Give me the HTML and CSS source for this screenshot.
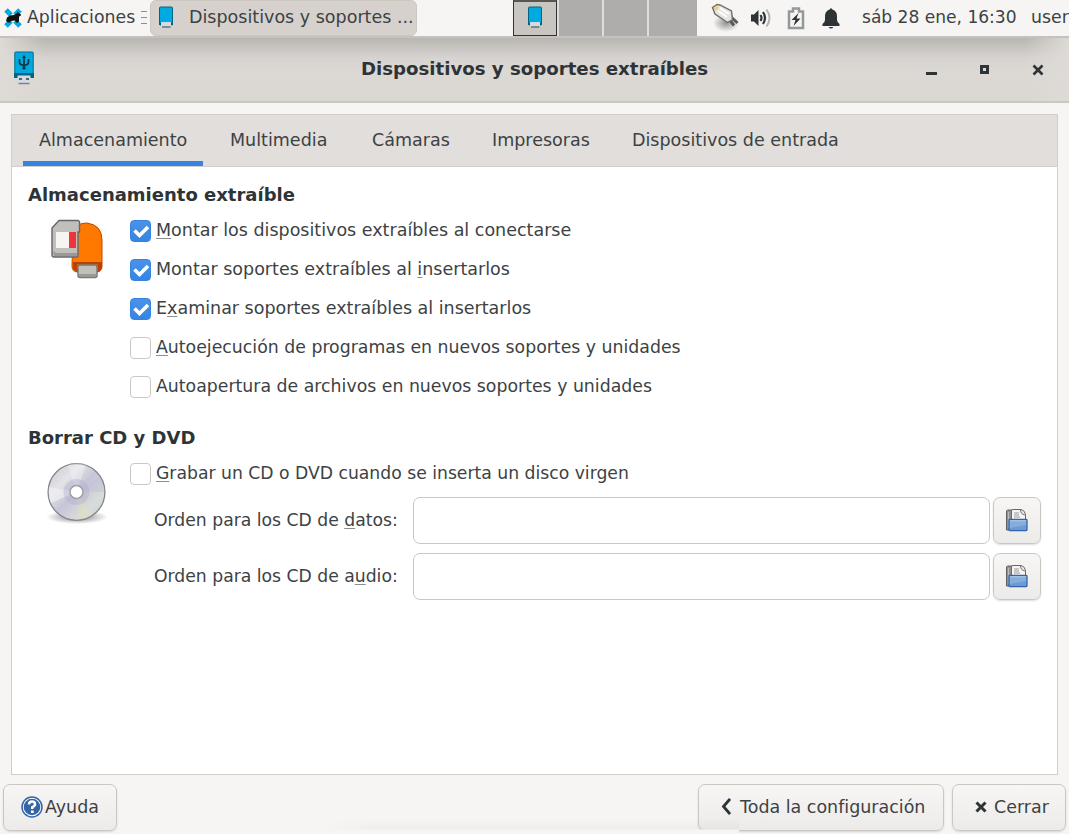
FILE: index.html
```
<!DOCTYPE html>
<html lang="es">
<head>
<meta charset="utf-8">
<title>Dispositivos y soportes extraíbles</title>
<link rel="stylesheet" href="styles.css">
</head>
<body>
<svg class="defs" width="0" height="0" aria-hidden="true">
  <defs>
    <symbol id="drive" viewBox="0 0 16 22">
      <rect x="1.500" y="1" width="13" height="18" rx="1" fill="#00a9e0" stroke="#006581"/>
      <path d="M1 16.500h14v2.500H1z" fill="#006581"/>
      <path d="M3 16h10v4.500H3z" fill="#d3dae3"/>
      <path d="M4 21h8.500" stroke="#647382" stroke-width="1.500"/>
    </symbol>
    <symbol id="folder" viewBox="0 0 24 24">
      <path d="M1.500 22V3l1-1h5v20z" fill="#929292" stroke="#5e5e5e"/>
      <path d="M3.500 4v16" stroke="#bbb"/>
      <path d="M6.500 14V2l1.500-.5h8q4 1 4.500 5v9z" fill="#f4f4f2" stroke="#696969"/>
      <path d="M15.500 2q0 4 4.500 5" fill="#ddd" stroke="#777"/>
      <path d="M9 5h5M9 7h5M9 9h6" stroke="#999"/>
      <rect x="4" y="11.500" width="18" height="11" rx=".8" fill="#85addc" stroke="#2f65ae" stroke-width="1.300"/>
      <path d="M5 12.800h16" stroke="#b8d0ed"/><path d="M5 20l16-3v4.500H5z" fill="#6d9ad1"/>
    </symbol>
  </defs>
</svg>
<header class="panel">
  <svg class="apps-icon" viewBox="0 0 20 20"><path d="M3 2l5 5M17 2l-5 5M3 18l5-5M17 18l-5-5" stroke="#00a9e0" stroke-width="5"/><path d="M3 13l1-3.500 3-2 4-.5 3-2 .500-1.500L16 5l2 1.500-.5 1.500-1.500.5v4.500l-1 1.500h-2l-1-2-4 .5-1 1.500H5z" fill="#111"/></svg>
  <span class="apps-label"><span class="t">Aplicaciones</span></span>
  <span class="grip"></span>
  <div class="task"><svg class="task-icon"><use href="#drive"/></svg><span class="t">Dispositivos y soportes ...</span></div>
  <div class="pager"><div class="desk active"><svg class="task-icon"><use href="#drive"/></svg></div><div class="desk"></div><div class="desk"></div><div class="desk last"></div></div>
  <div class="tray">
    <svg class="plug" viewBox="0 0 28 30"><defs><radialGradient id="ps"><stop offset="0" stop-color="#000" stop-opacity=".4"/><stop offset="1" stop-color="#000" stop-opacity="0"/></radialGradient></defs><ellipse cx="15" cy="20" rx="13" ry="9" fill="url(#ps)"/><path d="M18 16l5 6.500M20 14l6.500 6" stroke="#5a5a5a" stroke-width="3"/><path d="M1.500 4.500L6 1.500l3 .5 11.500 6 1 9-5 2.500L4 11z" fill="#e4e4e2" stroke="#6e6e6c" stroke-width="1.400"/><path d="M3 5l3-2 2 2-4 3z" fill="#f3cf60"/><path d="M7 8l9 6M9 5l9 6" stroke="#fff" stroke-width="2"/></svg>
    <svg class="vol" viewBox="0 0 22 20"><path d="M1 6.500h3L8.500 2v16L4 13.500H1z" fill="#2e3436"/><path d="M10.500 7q2 3 0 6M13 4q4 6 0 12" fill="none" stroke="#2e3436" stroke-width="2.200"/><path d="M16.500 1.500q6 8.500 0 17" fill="none" stroke="#b5b6b6" stroke-width="2"/></svg>
    <svg class="bat" viewBox="0 0 18 23"><path d="M6 1.500h6v3h4v16.500H2V4.500h4z" fill="#f6f5f4" stroke="#949899" stroke-width="2.500"/><path d="M11.500 6L4.500 13h4l-2 6 7-7.500H9.500z" fill="#2e3436"/></svg>
    <svg class="bell" viewBox="0 0 18 21"><path d="M9 0l1.500 1.500Q15 3 15 8v4q0 2 2.500 4v2H.5v-2Q3 14 3 12V8q0-5 4.500-6.500zM6.500 19h5q-2.500 3-5 0z" fill="#2e3436"/></svg>
  </div>
  <span class="clock"><span class="t">sáb 28 ene, 16:30</span></span>
  <span class="user"><span class="t">user</span></span>
</header>
<div class="titlebar">
  <svg class="app-icon" viewBox="0 0 20 34"><rect x=".8" y="1" width="18.400" height="25" rx=".8" fill="#00a9e0" stroke="#006b8c"/><path d="M0 22h20v5H0z" fill="#006581"/><path d="M10 5v13M5.500 8v3q0 3 4.500 3.500 4.500-.5 4.500-3.500V8" fill="none" stroke="#123640" stroke-width="1.700"/><path d="M8 7l2-3 2 3z" fill="#123640"/><circle cx="10" cy="17" r="1.700" fill="#123640"/><path d="M3.500 24.500h13v6l-2 2.500h-9l-2-2.500z" fill="#d3dae3"/><path d="M5 27h3v2H5zM12 27h3v2h-3z" fill="#57636e"/><path d="M4.500 32.500h11" stroke="#7b858e" stroke-width="1.500"/></svg>
  <h1 class="title"><span class="t b">Dispositivos y soportes extraíbles</span></h1>
  <div class="controls"><i class="min"></i><i class="max"></i><svg class="close" viewBox="0 0 12 12"><path d="M1.500 1.500l9 9M10.500 1.500l-9 9" stroke="#2e3436" stroke-width="2.600"/></svg></div>
</div>
<main class="notebook">
  <nav class="tabs"><div class="tab selected"><span class="t">Almacenamiento</span></div><div class="tab t2"><span class="t">Multimedia</span></div><div class="tab t3"><span class="t">Cámaras</span></div><div class="tab t4"><span class="t">Impresoras</span></div><div class="tab t5"><span class="t">Dispositivos de entrada</span></div></nav>
  <section class="group">
    <h2><span class="t b">Almacenamiento extraíble</span></h2>
    <div class="group-body">
      <svg class="media-icon" viewBox="0 0 54 62"><path d="M22 12Q25 4 36 4q15 2 15 17v26q0 6-6 6H27q-6 0-6-6z" fill="#ff7800" stroke="#c64600"/><path d="M22 43h29v6l-3 4H26l-4-3z" fill="#b84300"/><path d="M26 45h21v7H26z" fill="#df5b00"/><rect x="27" y="46" width="19" height="12.500" rx="2" fill="#c0bfbc" stroke="#77767b" stroke-width="1.400"/><path d="M28 55h17v3H28z" fill="#9a9996"/><path d="M1 9l7-7.500h19l1.500 1V13H27v24l-1 1H3q-2 0-2-2z" fill="#c0bfbc" stroke="#65656d" stroke-width="1.400"/><path d="M2 32l3 2h21v3H3z" fill="#9a9996"/><path d="M5 13h14v16H5z" fill="#f6f5f4"/><path d="M18 13h7v16h-7z" fill="#ed333b"/></svg>
      <div class="checks">
        <label class="check"><i class="box on"><svg viewBox="0 0 21 22"><path d="M4.500 10.500l5 5 8.500-8.500" fill="none" stroke="#fff" stroke-width="3.600"/></svg></i><span class="t w97"><u>M</u>ontar los dispositivos extraíbles al conectarse</span></label>
        <label class="check"><i class="box on"><svg viewBox="0 0 21 22"><path d="M4.500 10.500l5 5 8.500-8.500" fill="none" stroke="#fff" stroke-width="3.600"/></svg></i><span class="t w97">Montar soportes extraíbles al <u>i</u>nsertarlos</span></label>
        <label class="check"><i class="box on"><svg viewBox="0 0 21 22"><path d="M4.500 10.500l5 5 8.500-8.500" fill="none" stroke="#fff" stroke-width="3.600"/></svg></i><span class="t w97">E<u>x</u>aminar soportes extraíbles al insertarlos</span></label>
        <label class="check"><i class="box"></i><span class="t"><u>A</u>utoejecución de programas en nuevos soportes y unidades</span></label>
        <label class="check"><i class="box"></i><span class="t">Autoapertura de archivos en nuevos soportes y unidades</span></label>
      </div>
    </div>
  </section>
  <section class="group discs">
    <h2><span class="t b">Borrar CD y DVD</span></h2>
    <div class="group-body">
      <svg class="disc-icon" viewBox="0 0 62 64">
        <defs><linearGradient id="dg" x1="0" y1="0" x2="1" y2="1"><stop offset="0" stop-color="#c9c9cc"/><stop offset=".3" stop-color="#e3e3e8"/><stop offset=".5" stop-color="#c5c5d8"/><stop offset=".75" stop-color="#d9dcd8"/><stop offset="1" stop-color="#c4cee5"/></linearGradient><radialGradient id="sh"><stop offset="0" stop-color="#000" stop-opacity=".5"/><stop offset="1" stop-color="#000" stop-opacity="0"/></radialGradient></defs>
        <ellipse cx="31" cy="56" rx="31" ry="7" fill="url(#sh)"/><circle cx="30.500" cy="31" r="28.400" fill="url(#dg)" stroke="#858589" stroke-width="1.300"/><path d="M30.500 31L22 4q9-3 18 0z" fill="#fff" opacity=".3"/><path d="M30.500 31l23-15q5 8 5 15z" fill="#b9b9d3" opacity=".3"/><path d="M30.500 31l15 23q-7 4-13 4z" fill="#e9e3ae" opacity=".35"/><path d="M30.500 31L5 42q-3-7-2-16z" fill="#f4f4f7" opacity=".6"/><circle cx="30.500" cy="31" r="10" fill="none" stroke="#a9a9ca" stroke-width="6" opacity=".35"/><circle cx="30.500" cy="31" r="6.500" fill="#fff" stroke="#a1a1a6" stroke-width="1.500"/>
      </svg>
      <div class="checks">
        <label class="check"><i class="box"></i><span class="t w95"><u>G</u>rabar un CD o DVD cuando se inserta un disco virgen</span></label>
        <div class="field"><span class="field-label"><span class="t w95">Orden para los CD de <u>d</u>atos:</span></span><div class="entry"></div><div class="btn browse"><svg><use href="#folder"/></svg></div></div>
        <div class="field"><span class="field-label"><span class="t w95">Orden para los CD de a<u>u</u>dio:</span></span><div class="entry"></div><div class="btn browse"><svg><use href="#folder"/></svg></div></div>
      </div>
    </div>
  </section>
</main>
<footer class="actions">
  <div class="btn help"><svg class="help-icon" viewBox="0 0 22 22"><circle cx="11" cy="11" r="10" fill="#fff" stroke="#3465a4" stroke-width="1.500"/><circle cx="11" cy="11" r="8.300" fill="#3465a4"/><path d="M8 8.500Q8 5.500 11 5.500t3 2.700Q14 10 11.300 11.200V13" fill="none" stroke="#fff" stroke-width="2.500"/><path d="M10 14.500h2.700v2.500H10z" fill="#fff"/></svg><span class="t">Ayuda</span></div>
  <div class="btn all"><svg class="back" viewBox="0 0 10 17"><path d="M9 1L2.500 8.500 9 16" fill="none" stroke="#2e3436" stroke-width="2.800"/></svg><span class="t">Toda la configuración</span></div>
  <div class="btn shut"><svg class="x" viewBox="0 0 12 12"><path d="M1.500 1.500l9 9M10.500 1.500l-9 9" stroke="#2e3436" stroke-width="3"/></svg><span class="t">Cerrar</span></div>
  <div class="dock-shadow"></div>
</footer>
</body>
</html>
```
FILE: styles.css
```
* { box-sizing: border-box; }
body { margin: 0; width: 1069px; height: 834px; overflow: hidden; background: #f6f5f4; color: #3c4244; font: 18px/22px "DejaVu Sans", sans-serif; display: flex; flex-direction: column; position: relative; }
svg { display: block; flex: none; }
.defs { position: absolute; }
/* Condensed UI text */
.t { white-space: nowrap; display: block; transform: scaleX(.962); transform-origin: 0 0; }
.t.w97 { transform: scaleX(.972); }
.t.w95 { transform: scaleX(.956); }
.tab .t, .task .t { transform: scaleX(.973); }
.clock .t { transform: scaleX(.948); }
.actions .t { transform: scaleX(.97); }
.t.b { font-weight: bold; color: #2e3436; transform: none; }
.title .t.b { transform: scaleX(1.008); }
h1, h2 { margin: 0; font-size: 18px; line-height: 22px; }
u { text-decoration-thickness: 1px; text-underline-offset: 2px; text-decoration-color: #8a8e8f; }

.panel { height: 36px; flex: none; display: flex; background: #f6f5f4; padding-left: 3px; overflow: hidden; }
.apps-icon { width: 20px; height: 20px; margin-top: 8px; }
.apps-label { width: 119px; padding: 6px 0 0 4px; flex: none; }
.grip { width: 6px; height: 13px; margin: 11px 2px 0 -1px; flex: none; background: repeating-linear-gradient(#8b8e8f 0 1px, transparent 1px 6px); }
.task { width: 267px; height: 36px; flex: none; background: #d6d1cd; border: 1px solid #cdc7c2; border-radius: 6px; display: flex; padding: 5px 0 0 7px; margin-left: 1px; }
.task-icon { width: 16px; height: 22px; }
.task .t { margin-left: 15px; }
.pager { display: flex; margin-left: 96px; width: 184px; flex: none; background: #deddda; }
.desk { width: 43px; margin-left: 2px; background: #aeadac; flex: none; }
.desk.active { width: 44px; margin-left: 0; background: #c9c5c0; border: 1px solid #2e3436; border-top: 2px solid #555753; padding: 4px 0 0 13px; }
.desk.last { width: 48px; }
.tray { display: flex; width: 165px; flex: none; padding-left: 14px; }
.plug { width: 28px; height: 30px; margin-top: 3px; }
.vol { width: 22px; height: 20px; margin: 8px 0 0 11px; }
.bat { width: 18px; height: 23px; margin: 7px 0 0 15px; }
.bell { width: 18px; height: 21px; margin: 8px 0 0 17px; }
.clock { width: 169px; padding-top: 6px; flex: none; }
.user { padding-top: 6px; }

.titlebar { height: 67px; flex: none; display: flex; position: relative; border-top: 2px solid #c5c1bc; border-bottom: 2px solid #cdc7c2; background: linear-gradient(90deg, #dedad6 0, #dedad600 45px, #dedad600 1025px, #dedad6 100%), linear-gradient(#b8b6b1 0, #c8c4c1 10px, #d7d3d0 20px, #dcd8d4 35px, #dad7d2 100%); }
.app-icon { width: 20px; height: 34px; margin: 13px 0 0 14px; }
.title { margin: 20px 0 0 327px; width: 565px; }
.controls { display: flex; }
.min { width: 11px; height: 3px; background: #2e3436; margin-top: 34px; }
.max { width: 9px; height: 9px; border: 3px solid #2e3436; margin: 27px 0 0 43px; }
.close { width: 12px; height: 12px; margin: 26px 0 0 43px; }

.notebook { margin: 11px 11px 0; width: 1047px; height: 661px; flex: none; border: 1px solid #d3cec9; background: #fff; }
.tabs { height: 52px; background: #e1dedb; border-bottom: 1px solid #d3cec9; display: flex; padding-left: 11px; }
.tab { padding: 14px 16px 0; width: 180px; height: 51px; flex: none; }
.tab.selected { border-bottom: 5px solid #3584e4; }
.t2 { width: 153px; padding-left: 27px; }
.t3 { width: 120px; }
.t4 { width: 140px; }
.t5 { width: 240px; }
.group { padding: 17px 16px 0; }
.group-body { display: flex; padding-left: 23px; }
.media-icon { width: 54px; height: 62px; margin: 13px 25px 0 0; }
.checks { flex: 1; }
.group:not(.discs) .checks { padding-top: 4px; }
.check { height: 39px; display: flex; align-items: center; }
.box { width: 21px; height: 22px; border: 1.500px solid #cdc7c2; border-radius: 4px; background: #fff; margin: 2px 5px 0 0; flex: none; }
.box.on { border: 1px solid #3584e4; background: linear-gradient(#4b92e8, #3584e4); }
.box svg { margin: -1px; width: 21px; height: 22px; }
.discs { padding-top: 22px; }
.disc-icon { width: 62px; height: 64px; margin: 12px 22px 0 -5px; }
.discs .checks { padding-top: 4px; }
.field { display: flex; height: 56px; padding-top: 5px; }
.field-label { width: 283px; flex: none; padding: 12px 0 0 24px; }
.entry { width: 577px; height: 47px; flex: none; border: 1.500px solid #cdc7c2; border-radius: 7px; background: #fff; }
.btn { height: 47px; border: 1.500px solid #cdc7c2; border-radius: 7px; background: linear-gradient(#f7f6f5, #edebea); box-shadow: 0 1px 2px #0002; display: flex; flex: none; }
.browse { width: 48px; margin-left: 3px; padding: 10px 0 0 11px; }
.browse svg { width: 24px; height: 24px; }

.actions { display: flex; padding: 9px 3px 0; position: relative; height: 59px; }
.help { width: 114px; padding: 11px 0 0 17px; }
.help-icon { width: 22px; height: 22px; margin-right: 2px; }
.all { width: 246px; margin-left: 581px; padding: 11px 0 0 22px; }
.back { width: 10px; height: 17px; margin: 2px 9px 0 0; }
.shut { width: 114px; margin-left: 8px; padding: 11px 0 0 22px; }
.x { width: 12px; height: 12px; margin: 5px 7px 0 0; }
.dock-shadow { position: absolute; left: 320px; bottom: 0; width: 419px; height: 16px; background: linear-gradient(90deg, #f6f5f4, #f6f5f400 60px 370px, #f6f5f400), linear-gradient(transparent, #00000008 11px, #f6f5f4 12px); }
```
